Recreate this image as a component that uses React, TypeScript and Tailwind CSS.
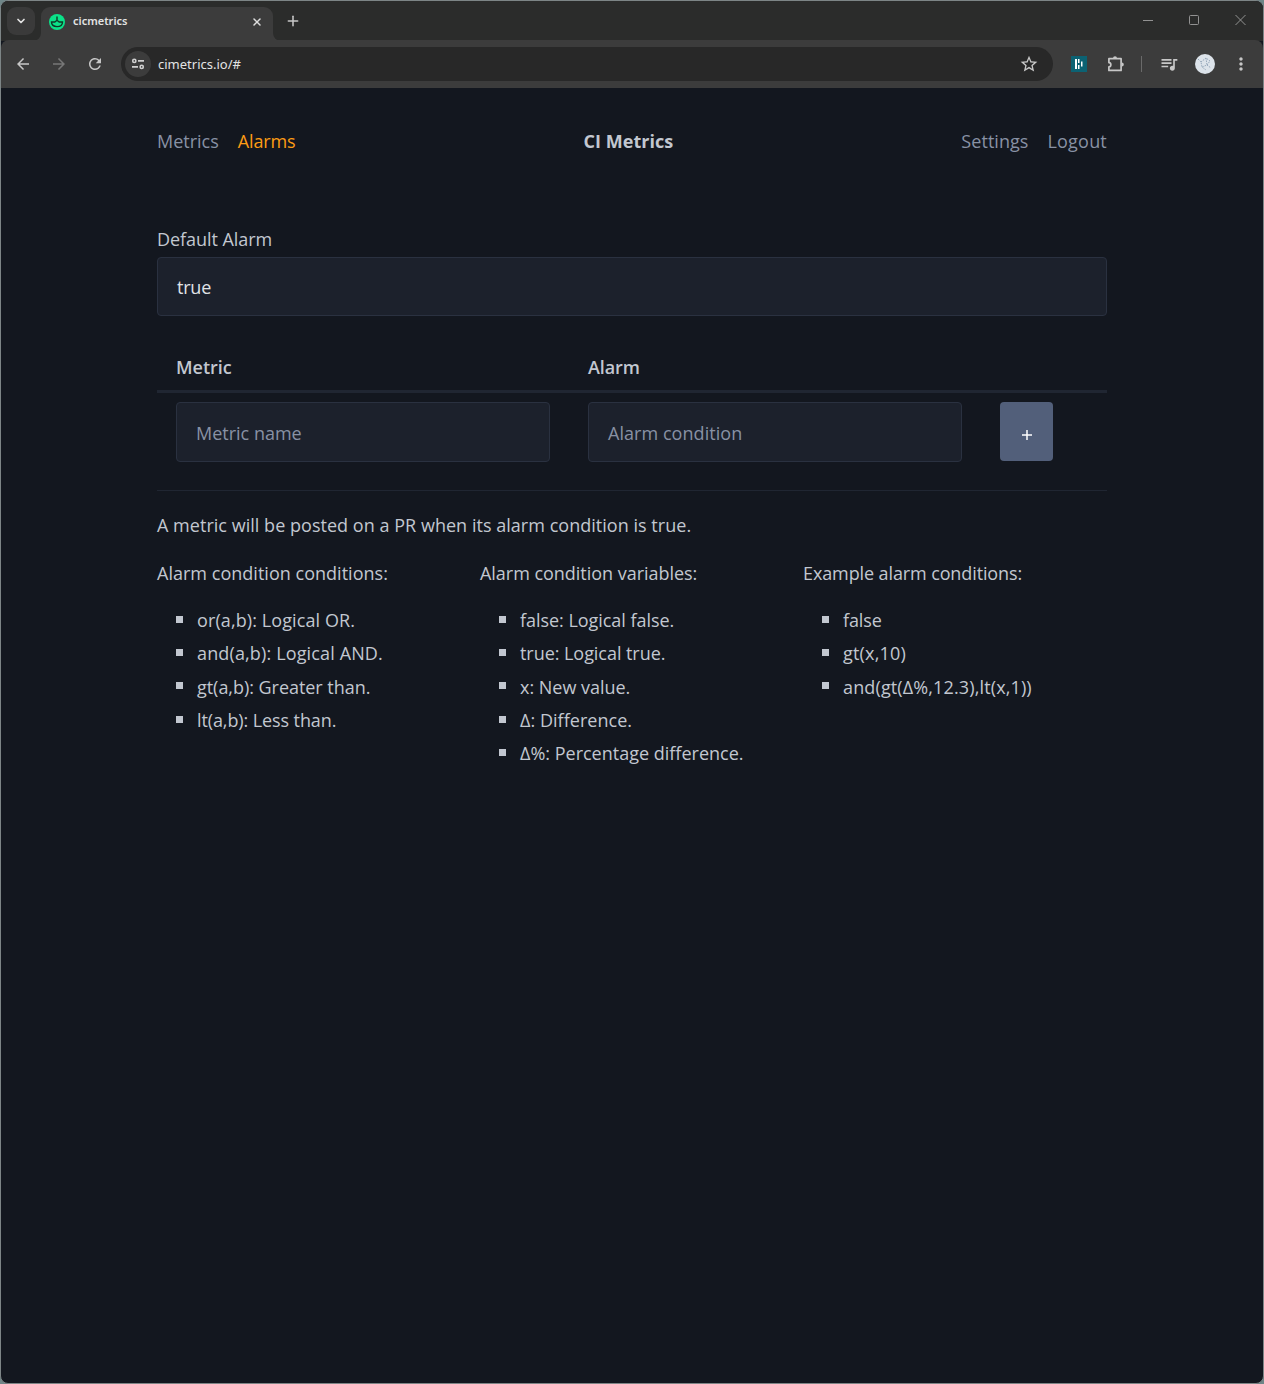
import type { ReactNode } from 'react';
import { ChevronDown, Plus, X } from 'lucide-react';
import { MdArrowBack, MdArrowForward, MdRefresh, MdStarOutline, MdQueueMusic, MdMoreVert } from 'react-icons/md';

type Item = { text: string; track?: string };

const columns: { title: Item; items: Item[] }[] = [
  {
    title: { text: 'Alarm condition conditions:', track: 'tracking-[0.02px]' },
    items: [
      { text: 'or(a,b): Logical OR.', track: 'tracking-[0.1px]' },
      { text: 'and(a,b): Logical AND.', track: 'tracking-[0.14px]' },
      { text: 'gt(a,b): Greater than.', track: 'tracking-[-0.04px]' },
      { text: 'lt(a,b): Less than.', track: 'tracking-[-0.1px]' },
    ],
  },
  {
    title: { text: 'Alarm condition variables:', track: 'tracking-[-0.03px]' },
    items: [
      { text: 'false: Logical false.', track: 'tracking-[-0.04px]' },
      { text: 'true: Logical true.', track: 'tracking-[-0.05px]' },
      { text: 'x: New value.', track: 'tracking-[-0.02px]' },
      { text: 'Δ: Difference.', track: 'tracking-[0.03px]' },
      { text: 'Δ%: Percentage difference.' },
    ],
  },
  {
    title: { text: 'Example alarm conditions:', track: 'tracking-[-0.11px]' },
    items: [
      { text: 'false', track: 'tracking-[-0.1px]' },
      { text: 'gt(x,10)', track: 'tracking-[0.2px]' },
      { text: 'and(gt(Δ%,12.3),lt(x,1))', track: 'tracking-[0.13px]' },
    ],
  },
];

function Favicon() {
  return (
    <svg className="size-4" viewBox="0 0 16 16" fill="none">
      <circle cx="8" cy="8" r="8" fill="#0be289" />
      <path d="M2.500 8h3.300L8 6.300 10.200 8h3.300c0 2.800-2.300 4.600-5.500 4.600S2.500 10.800 2.500 8zM8 2.500v4" stroke="#0f3a27" strokeWidth="1.400" />
    </svg>
  );
}

function TuneIcon() {
  return (
    <svg className="size-4" viewBox="0 0 16 16" fill="none" stroke="#d0d0d0" strokeWidth="1.600">
      <circle cx="4.300" cy="4.900" r="1.600" />
      <path d="M8 4.900h6M2 10.900h6" />
      <circle cx="11.700" cy="10.900" r="1.600" />
    </svg>
  );
}

function ExtensionIcon() {
  return (
    <svg className="size-[18px]" viewBox="0 0 18 18" fill="none">
      <path d="M1.900 3.700h12.200v11.700H1.900v-3.600c2.600 0 2.600-4.200 0-4.200z" stroke="#c7c7c7" strokeWidth="1.700" strokeLinejoin="round" />
      <path d="M6 3.200a2 2 0 0 1 4 0zM14.800 7.600a2 2 0 0 1 0 4z" fill="#c7c7c7" />
    </svg>
  );
}

function Browser({ children }: { children: ReactNode }) {
  return (
    <div className="h-[1384px] w-[1264px] overflow-hidden bg-[#6f8688]">
      <div className="flex h-[1384px] flex-col overflow-hidden rounded-lg border border-[#7d8586] bg-[#13171f]">
        <div className="flex h-10 shrink-0 bg-[#2b2c2b]">
          <div className="mt-1.5 ml-1.5 flex h-7 w-7 items-center justify-center rounded-[9px] bg-[#3a3a3a]">
            <ChevronDown className="size-3 text-[#e3e3e3]" strokeWidth={3.4} />
          </div>
          <svg className="-ml-[2px] size-2 self-end" viewBox="0 0 8 8">
            <path d="M8 0v8H0a8 8 0 0 0 8-8z" fill="#3c3c3c" />
          </svg>
          <div className="mt-1.5 flex h-[34px] w-[232px] items-center rounded-t-[9px] bg-[#3c3c3c] pb-[5px] pl-2">
            <Favicon />
            <span className="ml-2 text-[11px] font-semibold text-[#e3e3e3]">cicmetrics</span>
            <X className="mr-[10px] ml-auto size-3 text-[#dddddd]" strokeWidth={3} />
          </div>
          <svg className="size-2 self-end" viewBox="0 0 8 8">
            <path d="M0 0v8h8a8 8 0 0 1-8-8z" fill="#3c3c3c" />
          </svg>
          <Plus className="mt-3 ml-1 size-4 text-[#c7c7c7]" strokeWidth={2.3} />
          <svg className="mt-[13px] mr-4 ml-auto h-3 w-[104px]" viewBox="0 0 104 12" fill="none" stroke="#929292">
            <path d="M0 6.500h10" />
            <rect x="46.500" y="1.500" width="9" height="9" rx="1" />
            <path d="M92.500 1l10 10m0-10l-10 10" />
          </svg>
        </div>
        <div className="-mt-px flex h-[48px] shrink-0 items-center rounded-t-lg bg-[#3c3c3c] text-[#c7c7c7]">
          <MdArrowBack className="ml-[13px] size-[18px]" />
          <MdArrowForward className="ml-[18px] size-[18px] text-[#777777]" />
          <MdRefresh className="ml-[18px] size-[18px]" />
          <div className="ml-[17px] flex h-[34px] w-[932px] items-center rounded-full bg-[#282828] pl-1">
            <div className="flex size-[26px] items-center justify-center rounded-full bg-[#3c3c3c]">
              <TuneIcon />
            </div>
            <span className="mt-[2px] ml-[7px] text-[13px] text-[#e3e3e3]">cimetrics.io/#</span>
            <MdStarOutline className="mr-[14px] ml-auto size-5" />
          </div>
          <svg className="ml-[18px] size-4" viewBox="0 0 16 16">
            <path fill="#0c6273" d="M0 0h16v16H0z" />
            <path fill="#fff" d="M4 3h2v10H4zM7 3h1.500v4H7zM7 9h1.500v4H7zM10 5.500h1.500v5H10z" />
          </svg>
          <div className="ml-5">
            <ExtensionIcon />
          </div>
          <div className="ml-4 h-4 w-px bg-[#6a6a6a]" />
          <MdQueueMusic className="-mt-px ml-[17px] size-5" />
          <svg className="ml-4 size-5" viewBox="0 0 20 20">
            <circle cx="10" cy="10" r="10" fill="#dce3ea" />
            <path d="M3 5l3 3 1 5 4 3M6 8l5-4 4 3-3 4-5 2M12 11l4 3M11 4l1 7" fill="none" stroke="#8fa2b6" strokeWidth=".9" strokeDasharray="1.500 1" />
          </svg>
          <MdMoreVert className="ml-4 size-5" />
        </div>
        {children}
      </div>
    </div>
  );
}

function Field({ children, className }: { children: ReactNode; className: string }) {
  return <div className={`rounded-[4px] border border-[#2a3140] bg-[#1c212c] pl-[19px] ${className}`}>{children}</div>;
}

export default function App() {
  return (
    <Browser>
      <div className="mx-auto w-[950px] pt-[39px] font-['Open_Sans',sans-serif] text-[18px] leading-[28.5px] whitespace-nowrap text-[#c2c7d0]">
        <nav className="flex justify-between text-[#8891a4]">
          <div className="flex gap-[19px]">
            <a>Metrics</a>
            <a className="tracking-[-0.15px] text-[#fd9c14]">Alarms</a>
          </div>
          <strong className="font-bold tracking-[0.05px] text-[#c2c7d0]">CI Metrics</strong>
          <div className="flex gap-[19px]">
            <a className="tracking-[0.05px]">Settings</a>
            <a className="tracking-[0.2px]">Logout</a>
          </div>
        </nav>

        <div className="mt-[69.500px] tracking-[-0.05px]">Default Alarm</div>
        <Field className="mt-[3.500px] h-[59px] pt-[15px] tracking-[-0.2px] text-[#e0e3e7]">true</Field>

        <div className="mt-[36.500px] grid h-[40.500px] grid-cols-[412px_412px_126px] border-b-3 border-[#202632] pl-[19px] font-semibold">
          <span>Metric</span>
          <span className="tracking-[-0.1px]">Alarm</span>
        </div>
        <div className="mt-[9px] flex gap-[38px] pl-[19px] text-[#8891a4]">
          <Field className="h-[60px] w-[374px] pt-4">Metric name</Field>
          <Field className="h-[60px] w-[374px] pt-4 tracking-[0.05px]">Alarm condition</Field>
          <button className="flex h-[59px] w-[53px] items-center justify-center rounded-[4px] bg-[#525f7a] pt-[6px] pl-px text-white">
            <svg className="size-[10px]" viewBox="0 0 10 10" stroke="currentColor" strokeWidth="1.500">
              <path d="M0 5h10M5 0v10" />
            </svg>
          </button>
        </div>
        <div className="mt-7 h-px bg-[#202632]" />

        <p className="mt-5 tracking-[0.03px]">A metric will be posted on a PR when its alarm condition is true.</p>
        <div className="mt-[19.500px] grid grid-cols-[323px_323px_304px]">
          {columns.map(({ title, items }) => (
            <section key={title.text}>
              <p className={title.track}>{title.text}</p>
              <ul className="mt-[18.500px] flex flex-col gap-[4.750px] pl-[19px]">
                {items.map(({ text, track }) => (
                  <li key={text} className="flex items-center">
                    <span className="-mt-[2px] mr-[14px] size-[7px] bg-[#c2c7d0]" />
                    <span className={track}>{text}</span>
                  </li>
                ))}
              </ul>
            </section>
          ))}
        </div>
      </div>
    </Browser>
  );
}
